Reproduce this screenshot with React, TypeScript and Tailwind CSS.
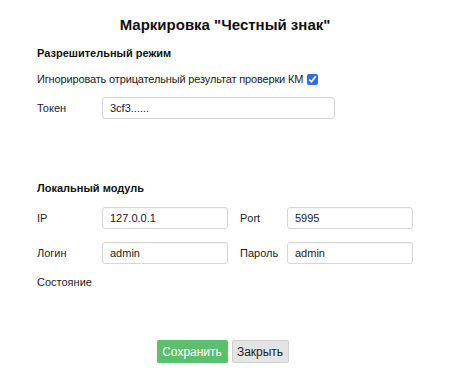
import React from 'react';

const font = { fontFamily: '"Liberation Sans", Arial, sans-serif' };

function Field({ label, value, labelWidth, inputWidth }: { label: string; value: string; labelWidth: string; inputWidth: string }) {
  return (
    <div className="flex items-center">
      <span className={`${labelWidth} text-[11px] text-[#222]`}>{label}</span>
      <input
        readOnly
        value={value}
        className={`${inputWidth} h-[22px] rounded-[3px] border border-[#d6d6d6] bg-white px-[7px] text-[11px] text-[#1a1a1a] outline-none shadow-[inset_0_1px_1px_rgba(0,0,0,0.04)]`}
      />
    </div>
  );
}

export default function App() {
  return (
    <div className="w-[450px] h-[382px] bg-white px-[37px] pt-[15px]" style={font}>
      <h1 className="text-center text-[15px] leading-5 font-bold text-[#111]">Маркировка "Честный знак"</h1>

      <h2 className="mt-[10px] text-[11px] leading-4 font-bold text-[#111]">Разрешительный режим</h2>
      <label className="mt-[10px] flex items-center gap-[4px] text-[11px] leading-4 tracking-[-0.15px] text-[#222]">
        Игнорировать отрицательный результат проверки КМ
        <input type="checkbox" defaultChecked className="m-0 h-[11px] w-[11px] accent-[#2f6fe4]" />
      </label>
      <div className="mt-[10px]">
        <Field label="Токен" value="3cf3......" labelWidth="w-[65px]" inputWidth="w-[233px]" />
      </div>

      <h2 className="mt-[61px] text-[11px] leading-4 font-bold text-[#111]">Локальный модуль</h2>
      <div className="mt-[11px] flex flex-col gap-[13px]">
        <div className="flex gap-[12px]">
          <Field label="IP" value="127.0.0.1" labelWidth="w-[65px]" inputWidth="w-[126px]" />
          <Field label="Port" value="5995" labelWidth="w-[47px]" inputWidth="w-[126px]" />
        </div>
        <div className="flex gap-[12px]">
          <Field label="Логин" value="admin" labelWidth="w-[65px]" inputWidth="w-[126px]" />
          <Field label="Пароль" value="admin" labelWidth="w-[47px]" inputWidth="w-[126px]" />
        </div>
      </div>
      <div className="mt-[10px] text-[11px] leading-4 text-[#222]">Состояние</div>

      <div className="mt-[50px] flex justify-center gap-[4px] pr-[5px]">
        <button className="h-[23px] w-[71px] rounded-[2px] bg-[#5cbf6b] text-[12px] text-white">Сохранить</button>
        <button className="h-[23px] w-[57px] rounded-[2px] border border-[#d0d0d0] bg-[#e4e4e4] text-[12px] text-[#222]">Закрыть</button>
      </div>
    </div>
  );
}
